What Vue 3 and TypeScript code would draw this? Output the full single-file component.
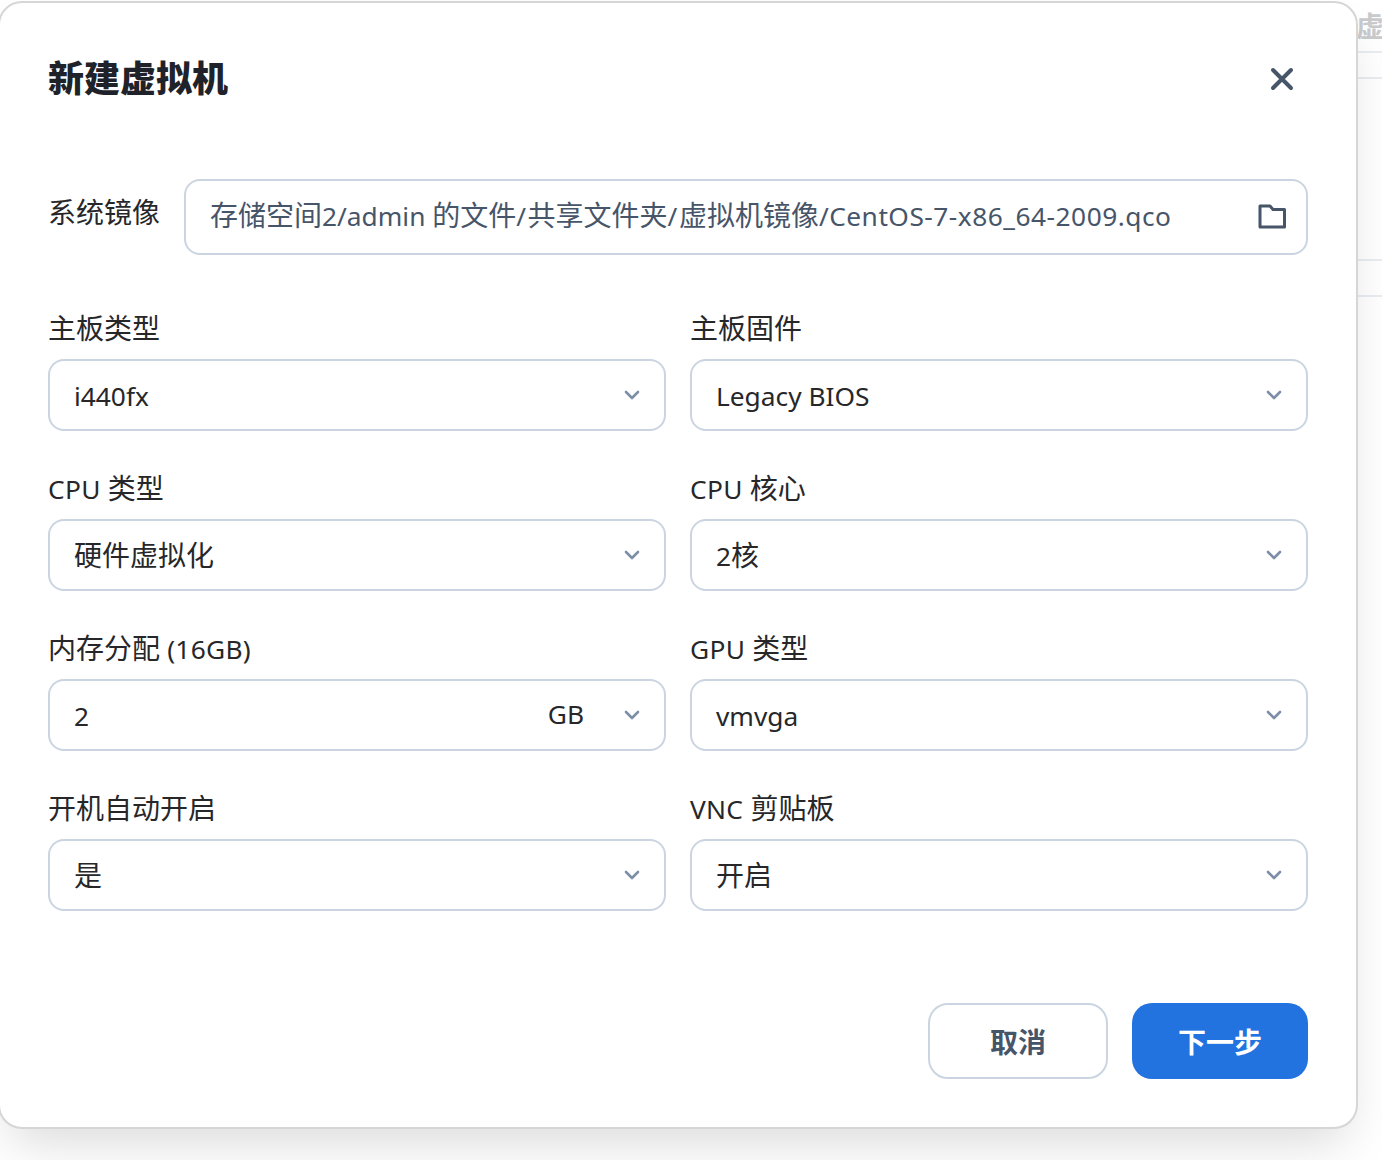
<script setup lang="ts">
interface Field { label: string; value: string; unit?: string }
interface Run { text: string; latin: boolean }

const fields: Field[] = [
  { label: '主板类型', value: 'i440fx' },
  { label: '主板固件', value: 'Legacy BIOS' },
  { label: 'CPU 类型', value: '硬件虚拟化' },
  { label: 'CPU 核心', value: '2核' },
  { label: '内存分配 (16GB)', value: '2', unit: 'GB' },
  { label: 'GPU 类型', value: 'vmvga' },
  { label: '开机自动开启', value: '是' },
  { label: 'VNC 剪贴板', value: '开启' },
]
const imagePath = '存储空间2/admin 的文件/共享文件夹/虚拟机镜像/CentOS-7-x86_64-2009.qcow2'

function runs(text: string): Run[] {
  const parts = text.match(/[\u0020-\u007e]+|[^\u0020-\u007e]+/g) ?? []
  return parts.map((p) => ({ text: p, latin: /^[\u0020-\u007e]/.test(p) }))
}
</script>

<template>
  <div class="page">
    <div class="backdrop">
      <span class="bg-title">虚</span>
      <div class="bg-line l1"></div>
      <div class="bg-line l2"></div>
      <div class="bg-line l3"></div>
      <div class="bg-line l4"></div>
    </div>
    <section class="dialog">
      <header class="head">
        <h1>新建虚拟机</h1>
        <svg class="close" width="28" height="28" viewBox="0 0 28 28" fill="none" stroke="#475569" stroke-width="4" stroke-linecap="round">
          <path d="M5 5 23 23M23 5 5 23" />
        </svg>
      </header>
      <div class="image-row">
        <span class="label">系统镜像</span>
        <div class="path-input">
          <span class="path-text"><span v-for="(r, i) in runs(imagePath)" :key="i" :class="{ latin: r.latin, slash: r.text === '/' }">{{ r.text }}</span></span>
          <svg class="folder" width="28" height="26" viewBox="0 0 28 26" fill="none" stroke="#475569" stroke-width="3" stroke-linejoin="round">
            <path d="M2 3H12L15 6.5H26.5V24H2Z" />
          </svg>
        </div>
      </div>
      <div class="grid">
        <div v-for="f in fields" :key="f.label" class="field">
          <label class="label"><span v-for="(r, i) in runs(f.label)" :key="i" :class="{ latin: r.latin }">{{ r.text }}</span></label>
          <div class="select">
            <span class="value"><span v-for="(r, i) in runs(f.value)" :key="i" :class="{ latin: r.latin }">{{ r.text }}</span></span>
            <span v-if="f.unit" class="unit latin">{{ f.unit }}</span>
            <svg class="chev" width="16" height="12" viewBox="0 0 16 12" fill="none" stroke="#7c8ea8" stroke-width="2.6" stroke-linecap="round" stroke-linejoin="round">
              <path d="M2 3 8 9 14 3" />
            </svg>
          </div>
        </div>
      </div>
      <footer class="foot">
        <button class="btn cancel">取消</button>
        <button class="btn next">下一步</button>
      </footer>
    </section>
  </div>
</template>

<style>
html, body { margin: 0; background: #fff; }
</style>

<style scoped>
.page {
  position: relative;
  width: 1382px;
  height: 1160px;
  overflow: hidden;
  font-family: "Noto Sans CJK SC", "Noto Sans", sans-serif;
  padding-top: 1px;
  box-sizing: border-box;
}
.latin { font-family: "Noto Sans", sans-serif; font-size: 26.3px; }
.backdrop { position: absolute; inset: 0; background: #fff; }
.bg-title { position: absolute; left: 1356px; top: 6px; font-size: 28px; font-weight: 700; line-height: 38px; color: #c9cacc; }
.bg-line { position: absolute; left: 1356px; right: 0; height: 2px; background: #e9ecf1; }
.l1 { top: 51px; }
.l2 { top: 77px; }
.l3 { top: 259px; }
.l4 { top: 295px; }
.dialog {
  position: relative;
  margin-left: -2px;
  width: 1360px;
  height: 1128px;
  box-sizing: border-box;
  background: #fff;
  border: 2px solid #d6d6d6;
  border-radius: 24px;
  box-shadow: 0 25px 50px -12px rgba(0, 0, 0, 0.15);
  padding: 0 48px;
  display: flex;
  flex-direction: column;
}
.head { display: flex; justify-content: space-between; align-items: center; height: 74px; margin-top: 39px; }
h1 { margin: 0 0 6px; font-size: 36px; line-height: 50px; font-weight: 900; color: #1f2329; }
.close { margin-right: 12px; }
.image-row { display: flex; align-items: flex-start; gap: 24px; margin-top: 63px; }
.label { display: block; height: 40px; font-size: 28px; line-height: 38px; color: #27272a; white-space: nowrap; }
.label .latin { letter-spacing: 0.3px; line-height: 1; }
.image-row .label { margin-top: 13px; }
.path-input {
  flex: 1;
  min-width: 0;
  height: 76px;
  box-sizing: border-box;
  border: 2px solid #cbd5e1;
  border-radius: 16px;
  display: flex;
  align-items: center;
  padding: 0 20px 0 24px;
}
.path-text {
  flex: 0 0 960px;
  overflow: hidden;
  white-space: nowrap;
  font-size: 28px;
  color: #475569;
  margin-bottom: 6px;
}
.path-text .slash { letter-spacing: 1.5px; }
.path-text .latin:last-child { letter-spacing: 0.5px; }
.folder { margin-left: auto; margin-bottom: 2px; }
.grid { display: grid; grid-template-columns: 1fr 1fr; column-gap: 24px; row-gap: 0; margin-top: 53px; }
.field { display: flex; flex-direction: column; gap: 11px; height: 160px; }
.select {
  height: 72px;
  box-sizing: border-box;
  border: 2px solid #cbd5e1;
  border-radius: 16px;
  display: flex;
  align-items: center;
  padding: 0 24px;
  font-size: 28px;
  color: #27272a;
}
.value { flex: 1; margin-bottom: 3px; }
.unit { margin-right: 40px; margin-bottom: 3px; }
.foot { display: flex; justify-content: flex-end; gap: 24px; margin-top: 55px; }
.btn {
  height: 76px;
  border-radius: 20px;
  font-family: inherit;
  font-size: 28px;
  font-weight: 700;
  padding: 0;
}
.cancel { width: 180px; background: #fff; border: 2px solid #cbd5e1; color: #475569; }
.next { width: 176px; background: #2273e0; border: 0; color: #fff; }
</style>
